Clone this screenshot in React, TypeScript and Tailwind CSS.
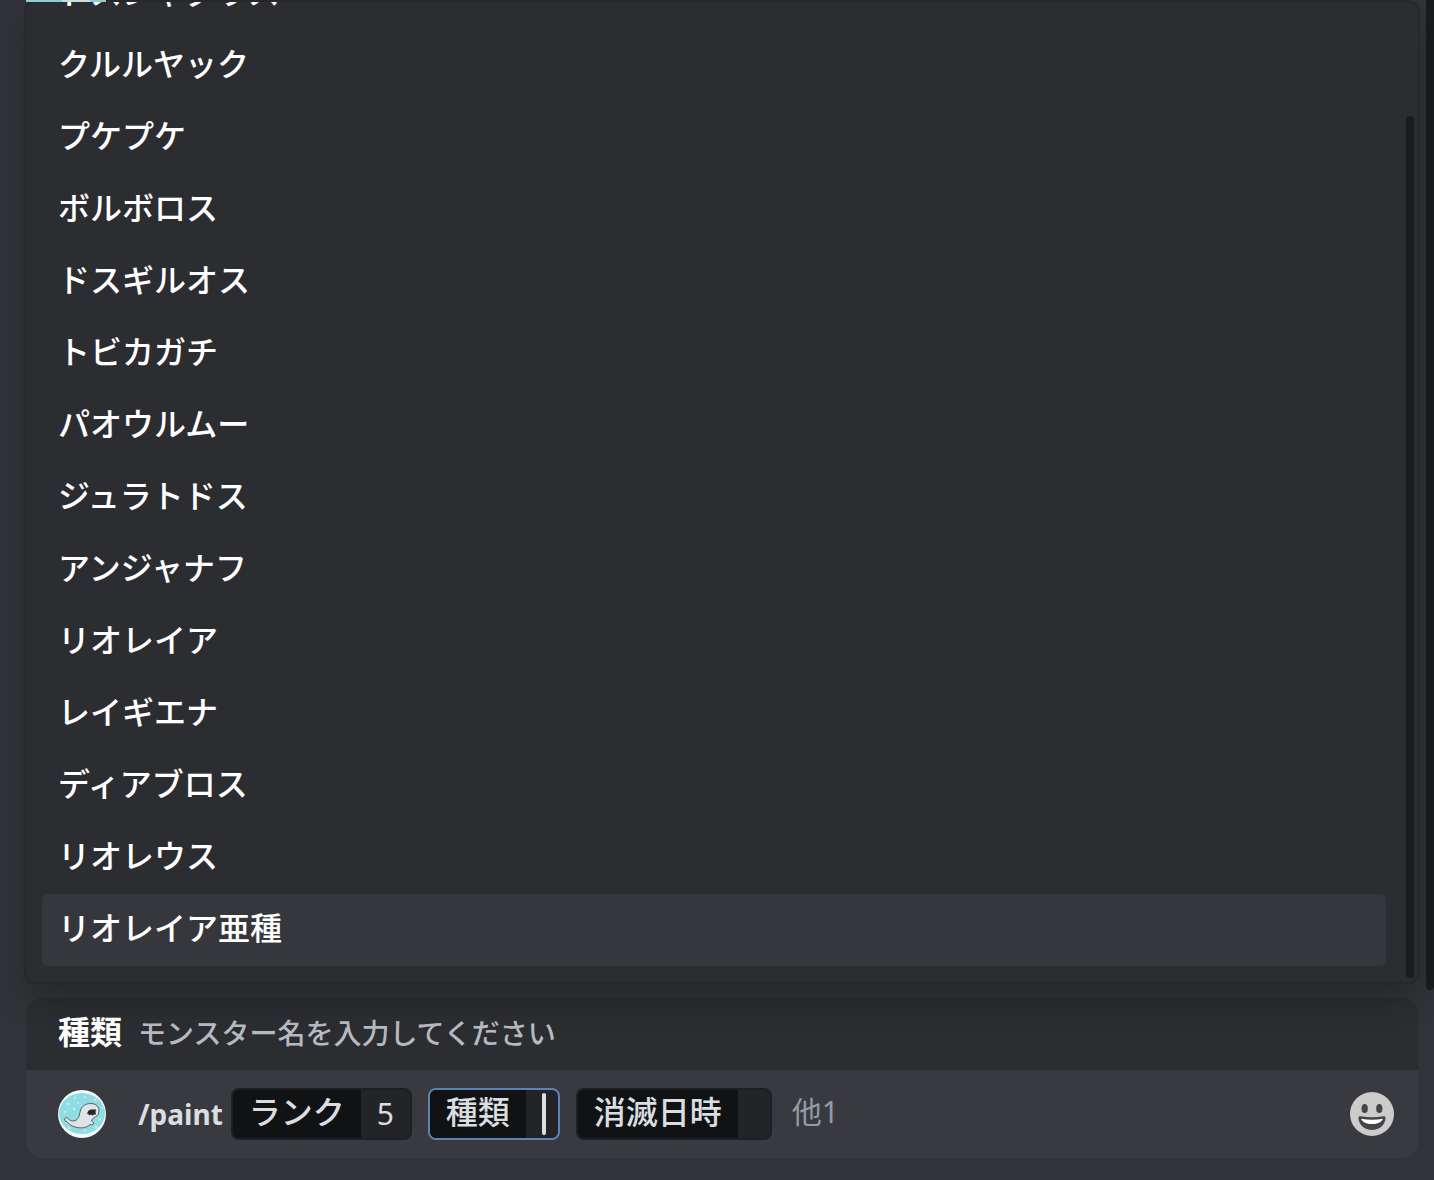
const monsters = [
  "ドスジャグラス", "クルルヤック", "プケプケ", "ボルボロス", "ドスギルオス",
  "トビカガチ", "パオウルムー", "ジュラトドス", "アンジャナフ", "リオレイア",
  "レイギエナ", "ディアブロス", "リオレウス", "リオレイア亜種",
];

function Avatar() {
  return (
    <svg viewBox="0 0 48 48" className="size-12 shrink-0" role="img" aria-label="アバター">
      <defs>
        <clipPath id="avatar-clip"><circle cx="24" cy="24" r="24" /></clipPath>
      </defs>
      <g clipPath="url(#avatar-clip)">
        <rect width="48" height="48" fill="#f4fbfb" />
        <ellipse cx="24" cy="23.5" rx="23" ry="20.5" fill="#8fdce2" />
        <g fill="#b9ecef">
          <circle cx="10" cy="14" r="1.6" /><circle cx="17" cy="8" r="1.4" /><circle cx="27" cy="7" r="1.3" />
          <circle cx="37" cy="10" r="1.5" /><circle cx="7" cy="22" r="1.4" /><circle cx="16" cy="19" r="1.5" />
          <circle cx="42" cy="29" r="1.6" /><circle cx="38" cy="37" r="1.6" /><circle cx="11" cy="38" r="1.4" />
          <circle cx="27" cy="41" r="1.4" /><circle cx="44" cy="18" r="1.1" /><circle cx="20" cy="13" r="1.2" />
        </g>
        <path
          d="M6.500 29C7.500 27 10 27.500 11 29.500C13.500 31.500 16.500 31.500 19 29.500C22 27 21 23.500 23 19C25 14.500 31 12.500 36 14C41 15.500 42 20.500 40 24.500C38.500 27 36 27.500 34.500 29L33.500 31L36 33L34.500 35L32 34.500C29 37.500 24 38.500 19.500 37.500C14 36.500 11 34.500 9 31.500C7.500 31.500 6 30.500 6.500 29Z"
          fill="#e0e4e6" stroke="#50565a" strokeWidth="0.9"
        />
        <path d="M29 23.500L30.500 20.500L33 19.500L38 19.500L37.500 22L38 24.500L36 24.500L34.500 25.500L33 24.500L31.500 25.500L30.500 24.300Z" fill="#26282a" />
      </g>
    </svg>
  );
}

function GrinIcon() {
  return (
    <svg viewBox="0 0 44 44" className="size-11" aria-hidden="true">
      <circle cx="22" cy="22" r="22" fill="#cccccc" />
      <ellipse cx="14.700" cy="16.500" rx="3.100" ry="4.600" fill="#454545" />
      <ellipse cx="29.300" cy="16.500" rx="3.100" ry="4.600" fill="#454545" />
      <path d="M8.500 25.500c0-1.200 1-1.500 2.500-1.200 7 1.300 15 1.300 22 0 1.500-.3 2.500 0 2.500 1.200C35.500 33 29.500 38 22 38S8.500 33 8.500 25.500Z" fill="#454545" />
      <path d="M11 26.700c7 1.300 15 1.300 22 0-1.500 3.300-5.500 5.300-11 5.300s-9.500-2-11-5.300Z" fill="#fff" />
    </svg>
  );
}

export default function App() {
  return (
    <main className="flex h-screen overflow-hidden bg-[#313338] font-['Noto_Sans','Noto_Sans_CJK_JP',sans-serif] text-[#dbdee1]">
      <div className="flex min-w-0 flex-1 flex-col pl-[26px]">
        <div className="relative z-20 flex h-[2px] shrink-0">
          <span className="w-[36px] bg-[#8fcdd2]" />
          <span className="w-[28px] bg-[#c9dcdf]" />
          <span className="w-[16px] bg-[#8fcdd2]" />
        </div>
        <div className="z-10 mr-2 flex min-h-0 flex-1 rounded-[10px] bg-[#2b2d31] shadow-[0_0_0_2px_#27282c,0_16px_32px_rgba(0,0,0,0.24)]">
          <ul role="listbox" aria-label="種類" className="flex min-w-0 flex-1 flex-col justify-end overflow-hidden px-4 pb-4">
            {monsters.map((name, i) => (
              <li key={name} role="option" aria-selected={i === 13} className="h-[72px] shrink-0">
                <button
                  type="button"
                  className={`flex h-full w-full items-center rounded-md px-4 pb-1 text-left text-[32px] leading-10 font-medium text-white ${i === 13 ? "bg-[#36373d]" : ""}`}
                >
                  {name}
                </button>
              </li>
            ))}
          </ul>
          <div className="mt-[114px] mr-1 mb-1 ml-1 w-2 rounded-full bg-[#1a1b1e]" />
        </div>

        <section className="mt-4 mr-2 mb-[22px] shrink-0 overflow-hidden rounded-2xl bg-[#383a40]">
          <header className="flex h-[72px] items-center gap-4 bg-[#2b2d31] px-8 pb-1">
            <h2 className="text-[32px] leading-10 font-bold text-white">種類</h2>
            <p className="pt-[2px] text-[28px] leading-10 font-medium text-[#b5bac1]">モンスター名を入力してください</p>
          </header>
          <form className="flex h-[88px] items-center pr-6 pl-8 text-[32px] leading-11" onSubmit={(e) => e.preventDefault()}>
            <Avatar />
            <span className="ml-8 text-[28px] font-bold">/paint</span>
            <label className="ml-2 flex h-[52px] overflow-hidden rounded-lg border-2 border-[#1e1f22] bg-[#232428]">
              <span className="bg-[#111214] px-4 font-medium">ランク</span>
              <input defaultValue="5" className="w-[49px] bg-transparent text-center text-[30px] outline-none" />
            </label>
            <label className="ml-4 flex h-[52px] overflow-hidden rounded-lg border-2 border-[#5b83b4] bg-[#232428]">
              <span className="bg-[#111214] px-4 font-medium">種類</span>
              <input className="w-4 bg-transparent outline-none" />
              <span className="mr-3 h-[42px] w-1 self-center rounded-sm bg-[#dbdee1]" />
            </label>
            <label className="ml-4 flex h-[52px] overflow-hidden rounded-lg border-2 border-[#1e1f22] bg-[#232428]">
              <span className="bg-[#111214] px-4 font-medium">消滅日時</span>
              <input className="w-8 bg-transparent outline-none" />
            </label>
            <span className="ml-5 pb-1 text-[30px] text-[#949ba4]">他1</span>
            <button type="button" aria-label="絵文字" className="ml-auto"><GrinIcon /></button>
          </form>
        </section>
      </div>
      <div className="mb-[190px] w-2 shrink-0 rounded-b-lg bg-[#1a1b1e]" />
    </main>
  );
}
